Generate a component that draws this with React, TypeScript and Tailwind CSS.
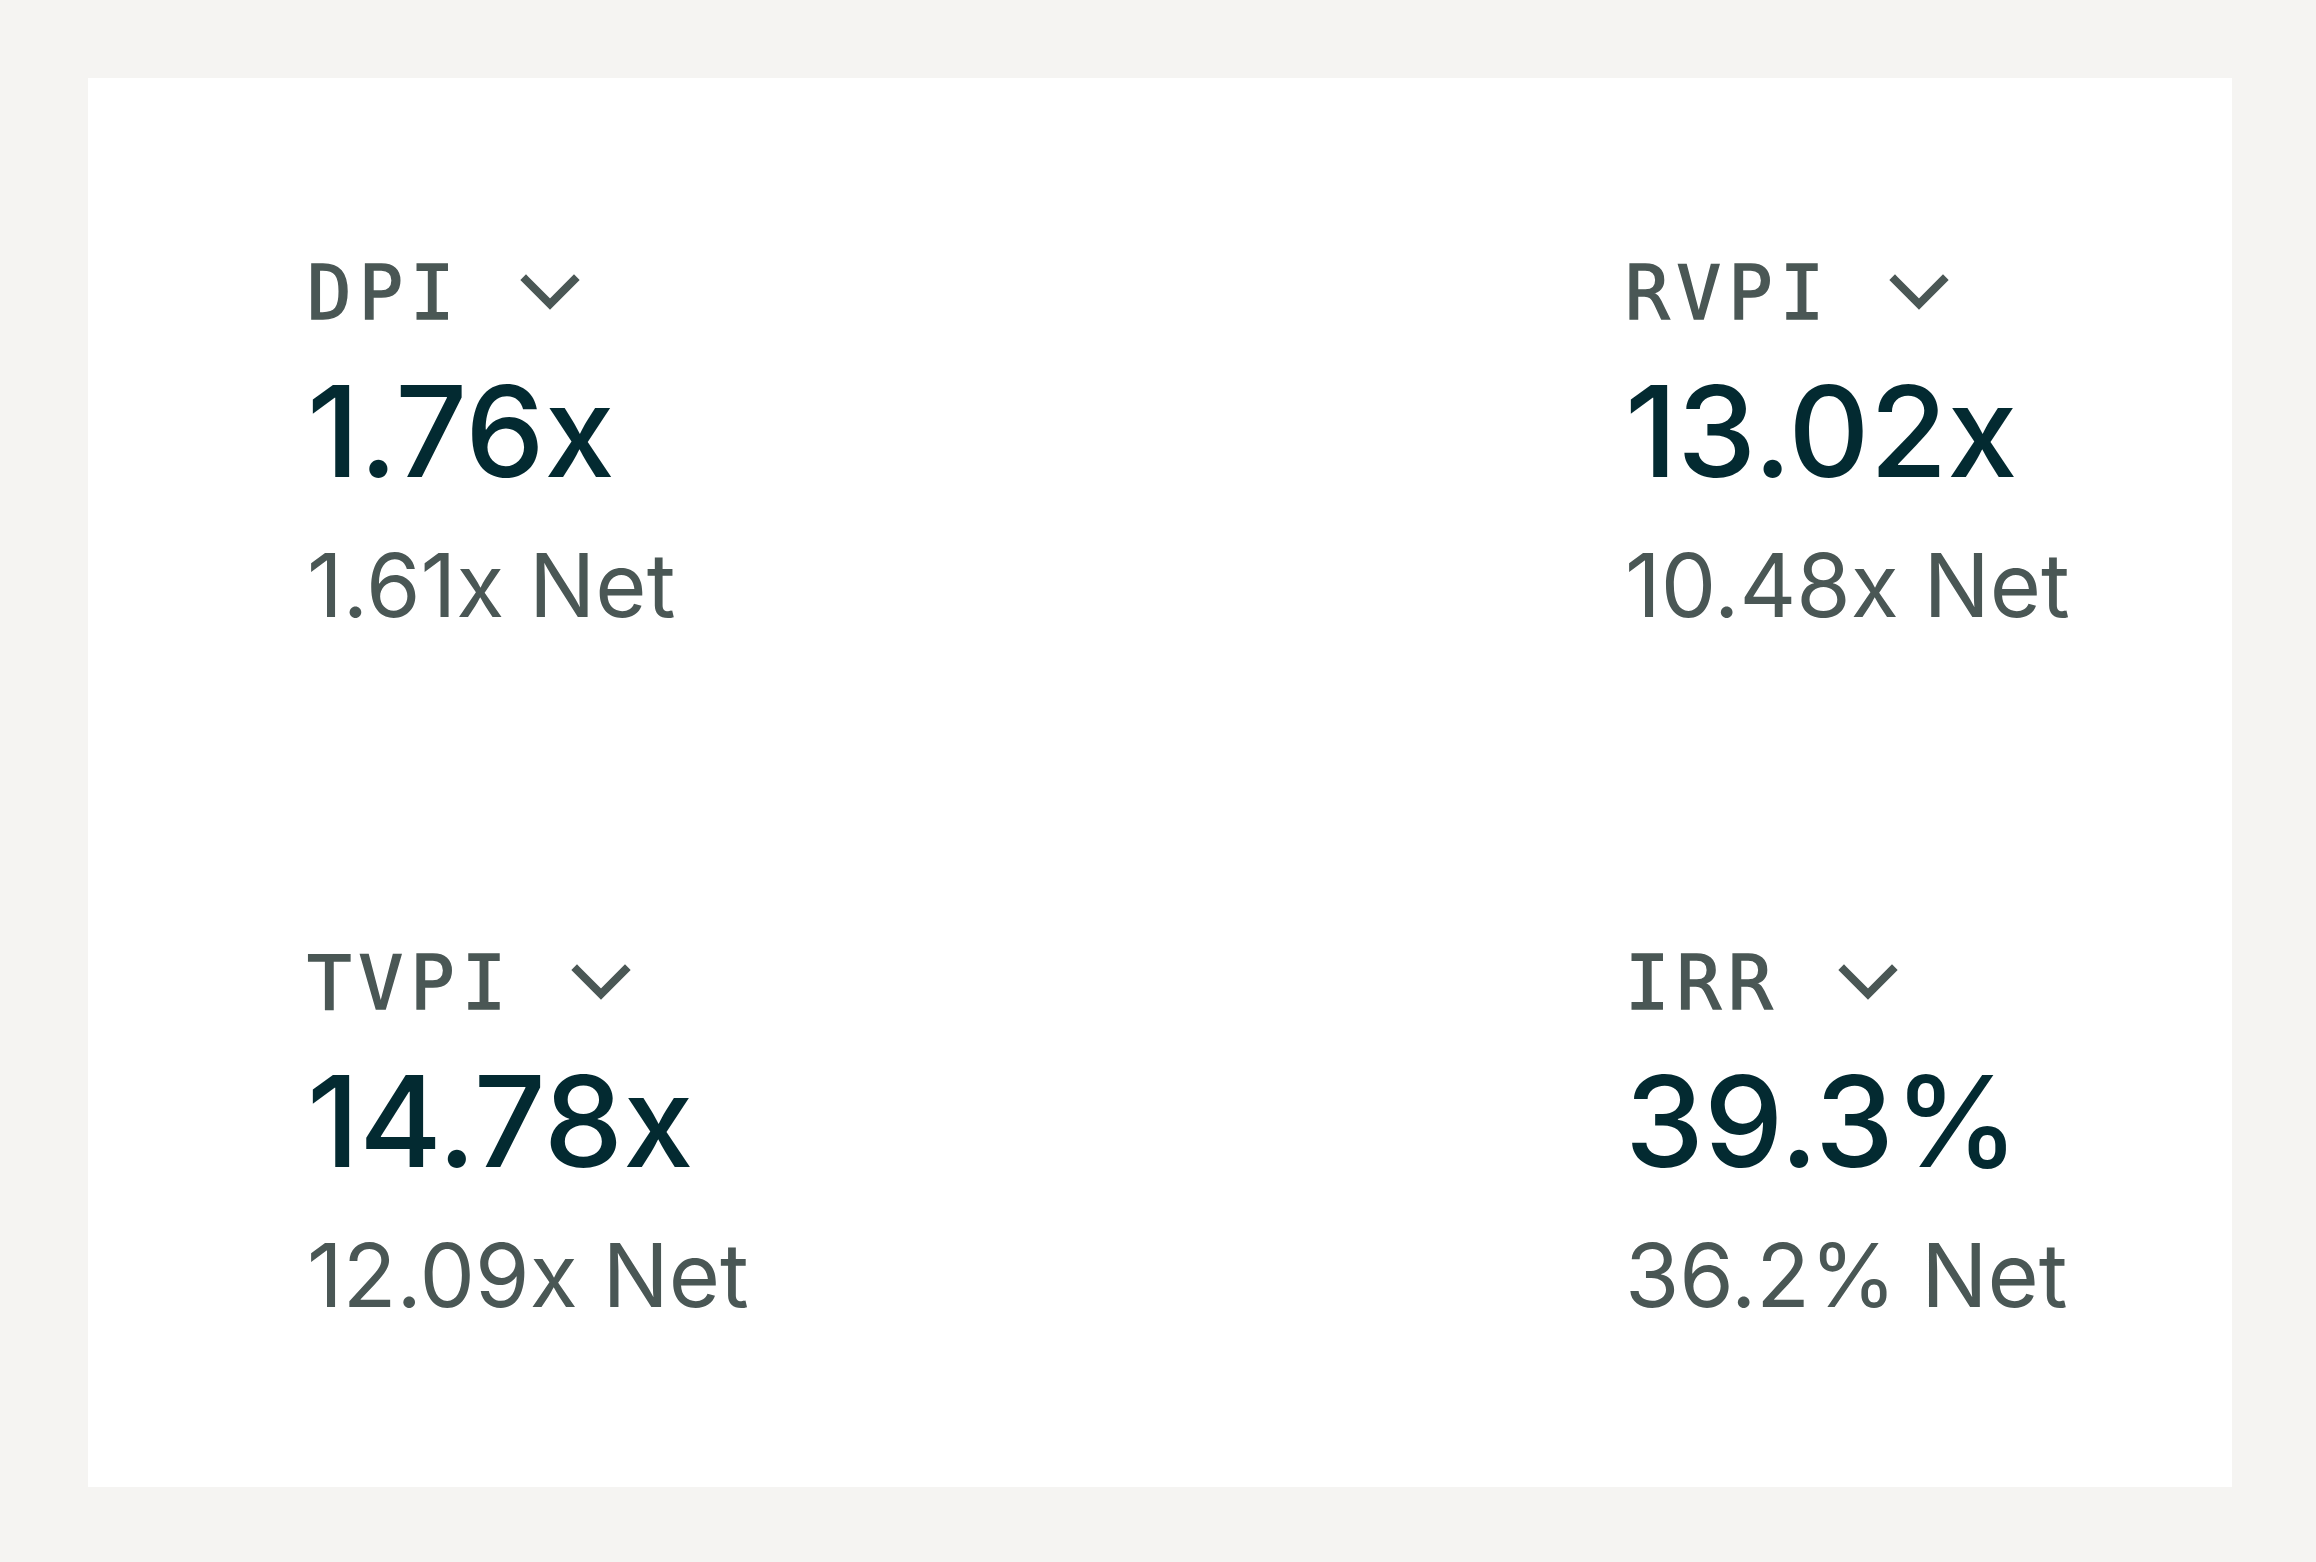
import React from "react";

function Chevron() {
  return (
    <svg width="60" height="38" viewBox="0 0 60 38" className="ml-[58px] shrink-0" aria-hidden="true">
      <polyline points="6,6 30,30 54,6" fill="none" stroke="#4a5755" strokeWidth="8" strokeLinecap="square" strokeLinejoin="miter" />
    </svg>
  );
}

function Metric({ label, value, net }: { label: string; value: string; net: string }) {
  return (
    <div className="flex flex-col">
      <div className="flex items-center h-[74px]">
        <span className="text-[74px] leading-none tracking-[7px] text-[#4a5755] [-webkit-text-stroke:1.5px_#4a5755]" style={{ fontFamily: '"DejaVu Sans Mono", monospace' }}>
          {label}
        </span>
        <Chevron />
      </div>
      <div className="mt-[38px] text-[126px] leading-none font-medium text-[#032a31]" style={{ fontFamily: 'Inter, "Noto Sans", sans-serif' }}>
        {value}
      </div>
      <div className="mt-[47px] text-[88px] leading-none font-normal text-[#4a5755]" style={{ fontFamily: 'Inter, "Noto Sans", sans-serif' }}>
        {net}
      </div>
    </div>
  );
}

export default function App() {
  return (
    <div className="min-h-screen bg-[#f5f4f2] pt-[78px] pl-[88px] pr-[84px] pb-[75px]">
      <div className="bg-white h-[1409px] pt-[178px] pl-[219px]">
        <div className="grid grid-cols-[1318px_auto] gap-y-[317px]">
          <Metric label="DPI" value="1.76x" net="1.61x Net" />
          <Metric label="RVPI" value="13.02x" net="10.48x Net" />
          <Metric label="TVPI" value="14.78x" net="12.09x Net" />
          <Metric label="IRR" value="39.3%" net="36.2% Net" />
        </div>
      </div>
    </div>
  );
}
